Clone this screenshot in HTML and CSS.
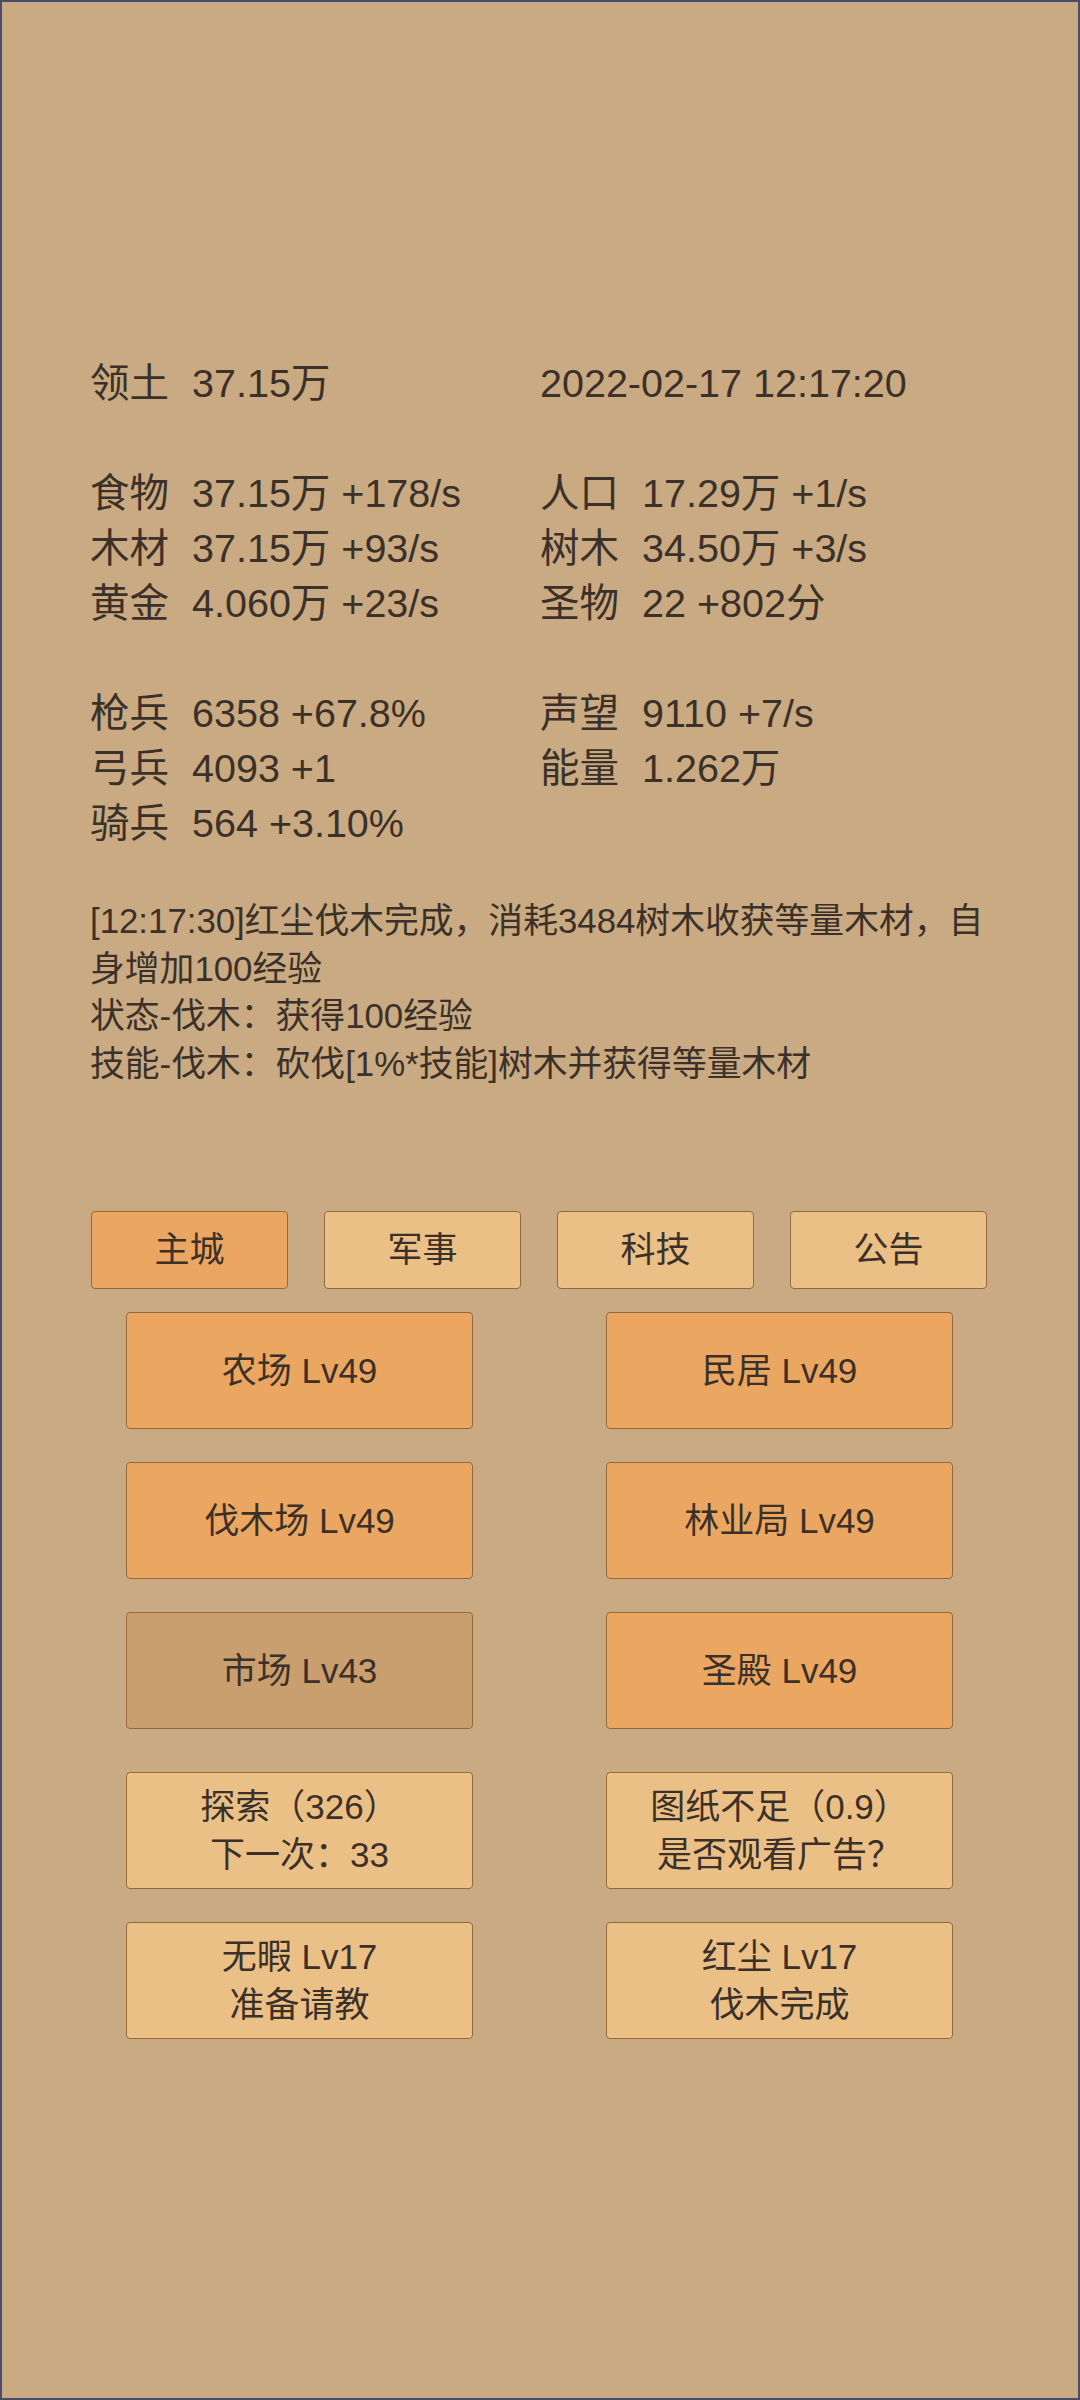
FILE: index.html
```html
<!DOCTYPE html>
<html lang="zh-CN">
<head>
<meta charset="utf-8">
<title>主城</title>
<link rel="stylesheet" href="styles.css">
</head>
<body>
<div class="page">
  <section class="stats">
    <div class="group">
      <div class="stat"><span class="k">领土</span><span class="v">37.15万</span></div>
      <div class="stat"><span class="v">2022-02-17 12:17:20</span></div>
    </div>
    <div class="group">
      <div class="stat"><span class="k">食物</span><span class="v">37.15万 +178/s</span></div>
      <div class="stat"><span class="k">人口</span><span class="v">17.29万 +1/s</span></div>
      <div class="stat"><span class="k">木材</span><span class="v">37.15万 +93/s</span></div>
      <div class="stat"><span class="k">树木</span><span class="v">34.50万 +3/s</span></div>
      <div class="stat"><span class="k">黄金</span><span class="v">4.060万 +23/s</span></div>
      <div class="stat"><span class="k">圣物</span><span class="v">22 +802分</span></div>
    </div>
    <div class="group">
      <div class="stat"><span class="k">枪兵</span><span class="v">6358 +67.8%</span></div>
      <div class="stat"><span class="k">声望</span><span class="v">9110 +7/s</span></div>
      <div class="stat"><span class="k">弓兵</span><span class="v">4093 +1</span></div>
      <div class="stat"><span class="k">能量</span><span class="v">1.262万</span></div>
      <div class="stat"><span class="k">骑兵</span><span class="v">564 +3.10%</span></div>
    </div>
  </section>

  <section class="log">
    <p>[12:17:30]红尘伐木完成，消耗3484树木收获等量木材，自身增加100经验</p>
    <p>状态-伐木：获得100经验</p>
    <p>技能-伐木：砍伐[1%*技能]树木并获得等量木材</p>
  </section>

  <nav class="tabs">
    <div class="btn tab active">主城</div>
    <div class="btn tab">军事</div>
    <div class="btn tab">科技</div>
    <div class="btn tab">公告</div>
  </nav>

  <section class="grid buildings">
    <div class="btn orange">农场 Lv49</div>
    <div class="btn orange">民居 Lv49</div>
    <div class="btn orange">伐木场 Lv49</div>
    <div class="btn orange">林业局 Lv49</div>
    <div class="btn dim">市场 Lv43</div>
    <div class="btn orange">圣殿 Lv49</div>
  </section>

  <section class="grid actions">
    <div class="btn light"><span>探索（326）</span><span>下一次：33</span></div>
    <div class="btn light"><span>图纸不足（0.9）</span><span>是否观看广告？</span></div>
    <div class="btn light"><span>无暇 Lv17</span><span>准备请教</span></div>
    <div class="btn light"><span>红尘 Lv17</span><span>伐木完成</span></div>
  </section>
</div>
</body>
</html>
```

FILE: styles.css
```css
* {
  box-sizing: border-box;
}

html, body {
  margin: 0;
  padding: 0;
}

body {
  font-family: "Liberation Sans", "Noto Sans CJK SC", sans-serif;
  color: #3b3129;
  background: #c9aa82;
}

.page {
  width: 1080px;
  height: 2400px;
  border: 2px solid #4b4e68;
  background: #c9aa82;
  padding: 354px 88px 0 88px;
  overflow: hidden;
}

/* ---- stats ---- */
.stats {
  font-size: 39.5px;
  line-height: 55px;
}

.group {
  display: grid;
  grid-template-columns: 450px 450px;
}

.group + .group {
  margin-top: 55px;
}

.stat {
  display: flex;
  white-space: nowrap;
}

.k {
  width: 102px;
  flex: none;
}

/* ---- log ---- */
.log {
  margin-top: 46px;
  width: 904px;
  font-size: 34.8px;
  line-height: 47.6px;
}

.log p {
  margin: 0;
}

/* ---- buttons ---- */
.btn {
  display: flex;
  flex-direction: column;
  align-items: center;
  justify-content: center;
  border: 1.5px solid #946a3d;
  border-radius: 4px;
  font-size: 35px;
  line-height: 48px;
  white-space: nowrap;
}

.tabs {
  margin-top: 124px;
  margin-left: 1px;
  display: flex;
  gap: 36px;
}

.tab {
  width: 197px;
  height: 78px;
  background: #ebc087;
}

.tab.active {
  background: #eba762;
}

.grid {
  display: grid;
  grid-template-columns: 347px 347px;
  column-gap: 133px;
  row-gap: 33px;
  padding-left: 36px;
}

.grid .btn {
  height: 117px;
}

.buildings {
  margin-top: 23px;
}

.actions {
  margin-top: 43px;
}

.orange {
  background: #eba762;
}

.dim {
  background: #c99f6f;
}

.light {
  background: #ebc087;
}
```
